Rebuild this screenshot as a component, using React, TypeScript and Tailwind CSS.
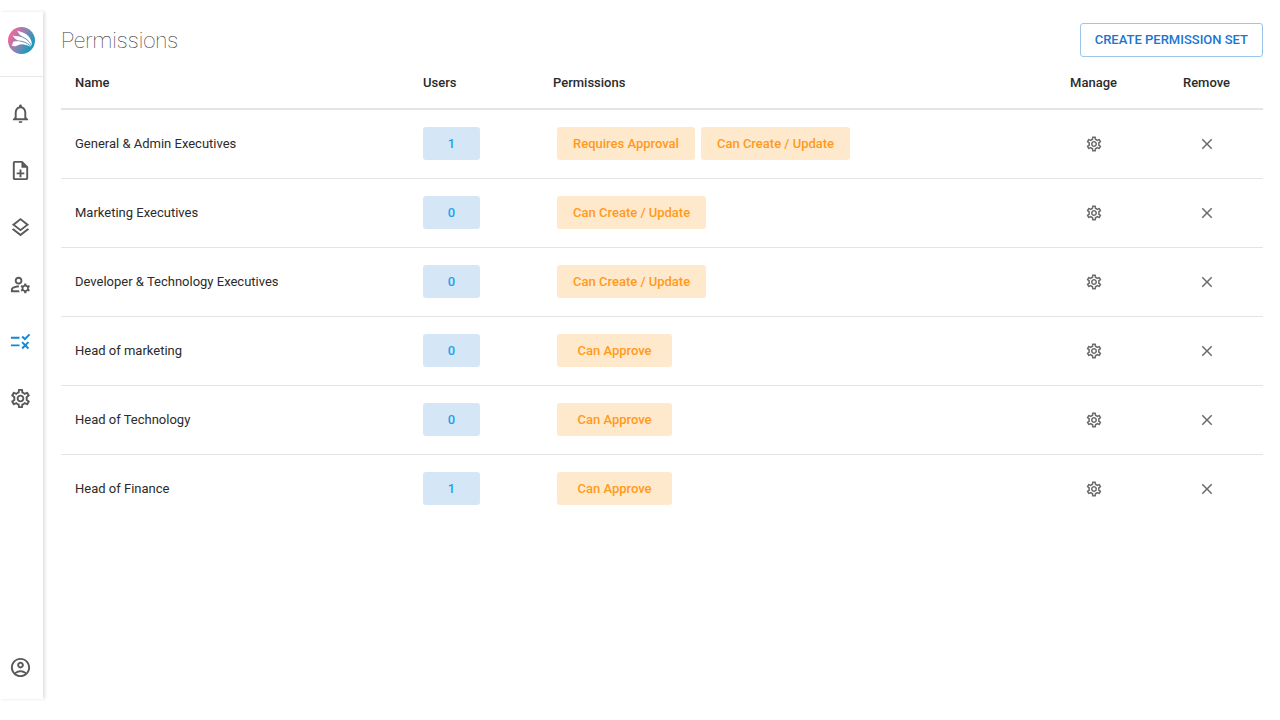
import clsx from 'clsx'
import type { IconType } from 'react-icons'
import {
  MdClose,
  MdNotificationsNone,
  MdOutlineAccountCircle,
  MdOutlineLayers,
  MdOutlineManageAccounts,
  MdOutlineNoteAdd,
  MdOutlineSettings,
  MdRule,
} from 'react-icons/md'

interface NavItem {
  label: string
  icon: IconType
  active?: boolean
}

interface PermissionSet {
  name: string
  users: number
  permissions: string[]
}

const navItems: NavItem[] = [
  { label: 'Notifications', icon: MdNotificationsNone },
  { label: 'New request', icon: MdOutlineNoteAdd },
  { label: 'Layers', icon: MdOutlineLayers },
  { label: 'Manage users', icon: MdOutlineManageAccounts },
  { label: 'Permissions', icon: MdRule, active: true },
  { label: 'Settings', icon: MdOutlineSettings },
]

const permissionSets: PermissionSet[] = [
  { name: 'General & Admin Executives', users: 1, permissions: ['Requires Approval', 'Can Create / Update'] },
  { name: 'Marketing Executives', users: 0, permissions: ['Can Create / Update'] },
  { name: 'Developer & Technology Executives', users: 0, permissions: ['Can Create / Update'] },
  { name: 'Head of marketing', users: 0, permissions: ['Can Approve'] },
  { name: 'Head of Technology', users: 0, permissions: ['Can Approve'] },
  { name: 'Head of Finance', users: 1, permissions: ['Can Approve'] },
]

function Logo() {
  return (
    <svg width="27" height="27" viewBox="0 0 54 54" aria-hidden="true">
      <defs>
        <linearGradient id="logo-fill" x1="4" y1="16" x2="44" y2="40" gradientUnits="userSpaceOnUse">
          <stop offset="0" stopColor="#f2659a" />
          <stop offset="0.5" stopColor="#8a84b4" />
          <stop offset="1" stopColor="#2197bb" />
        </linearGradient>
      </defs>
      <circle cx="27" cy="27" r="27" fill="url(#logo-fill)" />
      {/* three feathers meeting at the lower right */}
      <path d="M18 7C22 10 28 9 34 13C43 18 48 27 48 37C43 28 37 22 29 19C24 17 21 13 18 7Z" fill="#fff" />
      <path d="M9 17C14 19 21 17 29 21C38 25 44 31 47 39C39 31 31 27 23 27C16 27 13 22 9 17Z" fill="#fff" />
      <path d="M7 37C11 34 8 30 12 29C26 27 39 32 46 40C36 35 27 33 21 36C17 38 13 40 7 37Z" fill="#fff" />
    </svg>
  )
}

function Sidebar() {
  return (
    <aside className="flex w-[43px] shrink-0 flex-col shadow-[2px_0_3px_rgba(0,0,0,0.12)]">
      <a href="#home" aria-label="Home" className="flex h-[65px] items-start justify-center border-b border-gray-200 pt-[15px]">
        <Logo />
      </a>
      <nav className="flex flex-col pt-2">
        {navItems.map(({ label, icon: Icon, active }) => (
          <a
            key={label}
            href="#"
            aria-label={label}
            className={clsx(
              'flex h-[57px] w-[41px] items-center justify-center',
              active ? 'text-[#1288d4]' : 'text-[#595959]',
            )}
          >
            <Icon size={23} />
          </a>
        ))}
      </nav>
      <a href="#" aria-label="Account" className="mt-auto flex w-[41px] justify-center pb-5 text-[#595959]">
        <MdOutlineAccountCircle size={23} />
      </a>
    </aside>
  )
}

function PermissionRow({ name, users, permissions }: PermissionSet) {
  return (
    <tr className="h-[69px] border-b border-[#e4e4e4] last:border-b-0">
      <td className="px-3.5">{name}</td>
      <td className="px-3.5">
        <span className="flex h-[33px] w-[57px] items-center justify-center rounded-[3px] bg-[#d5e7f7] font-medium text-[#1aa3ea]">
          {users}
        </span>
      </td>
      <td className="px-[18px]">
        <div className="flex gap-1.5">
          {permissions.map(permission => (
            <span
              key={permission}
              className="flex h-[33px] min-w-[115px] items-center justify-center rounded-[3px] bg-[#ffe9cc] px-4 font-medium whitespace-nowrap text-[#ff9a1c]"
            >
              {permission}
            </span>
          ))}
        </div>
      </td>
      <td>
        <button type="button" aria-label={`Manage ${name}`} className="mx-auto block text-[#6b6b6b]">
          <MdOutlineSettings size={18} />
        </button>
      </td>
      <td>
        <button type="button" aria-label={`Remove ${name}`} className="mx-auto block text-[#6b6b6b]">
          <MdClose size={18} />
        </button>
      </td>
    </tr>
  )
}

export default function App() {
  return (
    <div className="flex min-h-screen bg-white pt-3 pb-[21px] font-['Roboto',sans-serif] text-[13px] text-[#2b2b2b]">
      <Sidebar />
      <main className="min-w-0 flex-1 pt-[11px] pr-[17px] pl-[18px]">
        <header className="flex h-[34px] items-center justify-between">
          <h1 className="text-[22px] font-thin text-[#333]">Permissions</h1>
          <button
            type="button"
            className="h-full rounded-[3px] border border-[#9cc5ec] px-3.5 font-medium text-[#1976d2] uppercase"
          >
            Create permission set
          </button>
        </header>
        <table className="w-full table-fixed border-collapse">
          <thead>
            <tr className="h-[52px] border-b-2 border-[#e4e4e4] text-left">
              <th className="w-[348px] px-3.5 font-medium">Name</th>
              <th className="w-[130px] px-3.5 font-medium">Users</th>
              <th className="px-3.5 font-medium">Permissions</th>
              <th className="w-[113px] text-center font-medium">Manage</th>
              <th className="w-[113px] text-center font-medium">Remove</th>
            </tr>
          </thead>
          <tbody>
            {permissionSets.map(set => (
              <PermissionRow key={set.name} {...set} />
            ))}
          </tbody>
        </table>
      </main>
    </div>
  )
}
